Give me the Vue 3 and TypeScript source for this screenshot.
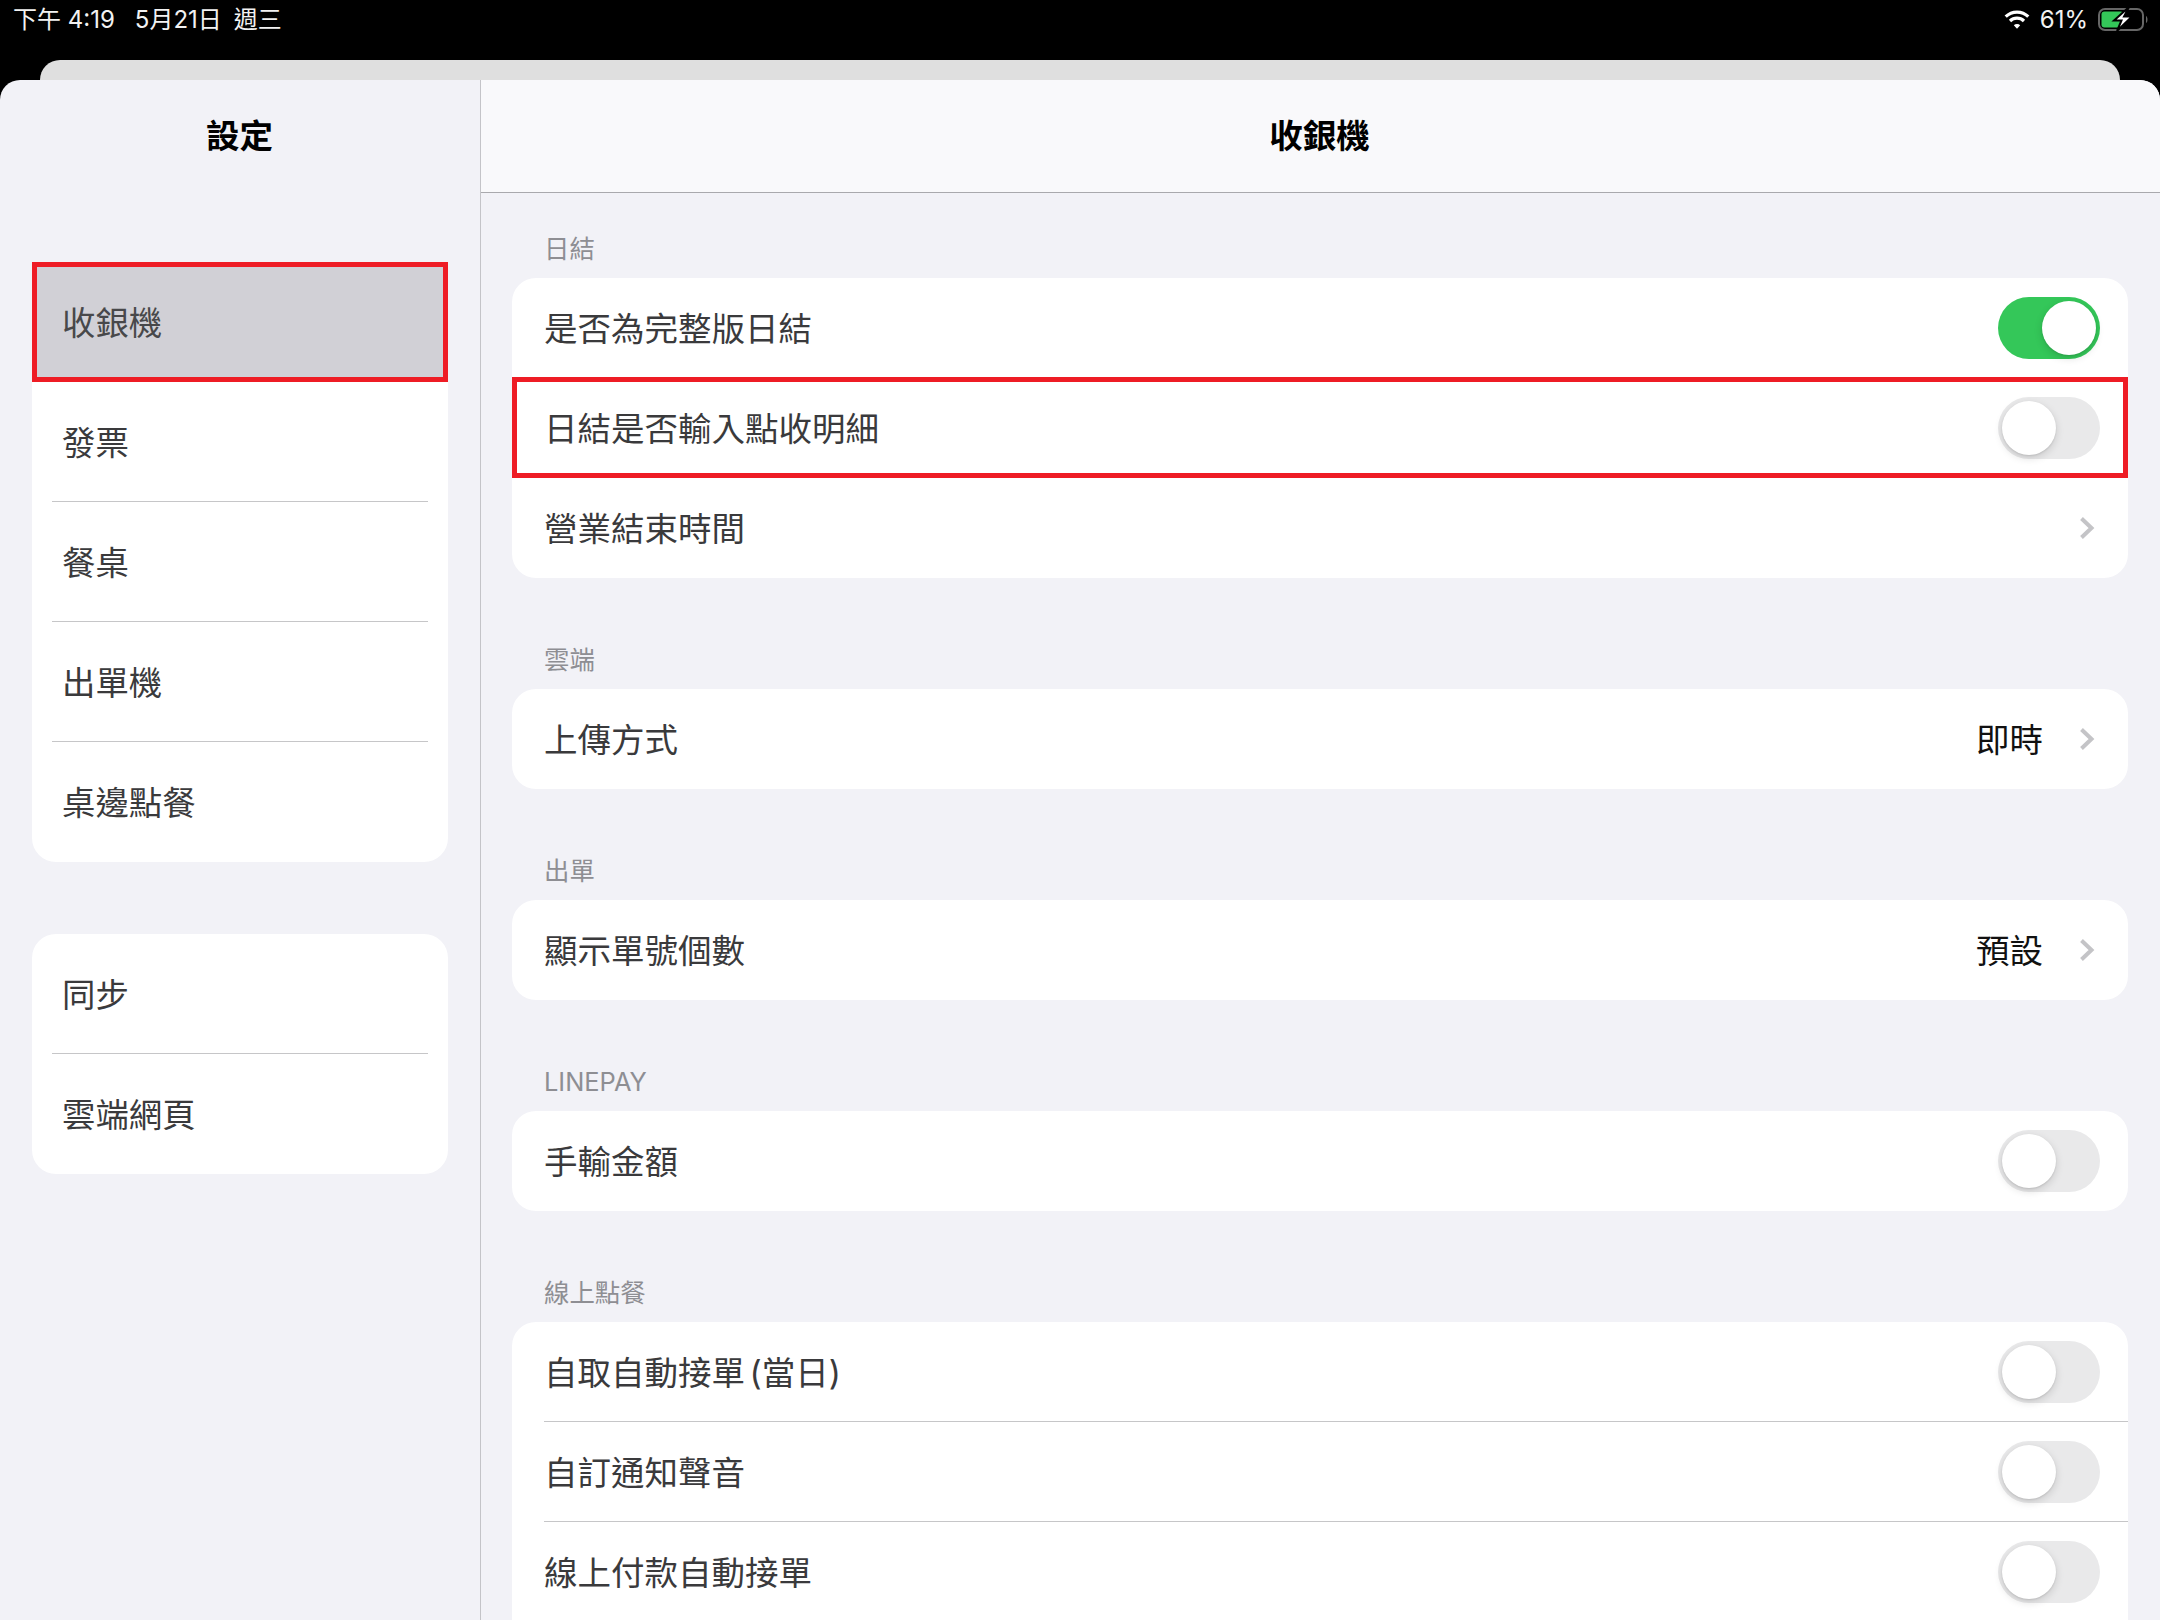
<script setup lang="ts">
interface SideRow { label: string; selected?: boolean }
interface Row { label: string; kind: 'toggle' | 'link'; on?: boolean; value?: string; marked?: boolean; rule?: boolean }
interface Section { title: string; rows: Row[]; open?: boolean }

const sideGroups: SideRow[][] = [
  [
    { label: '收銀機', selected: true },
    { label: '發票' },
    { label: '餐桌' },
    { label: '出單機' },
    { label: '桌邊點餐' },
  ],
  [{ label: '同步' }, { label: '雲端網頁' }],
]

const sections: Section[] = [
  {
    title: '日結',
    rows: [
      { label: '是否為完整版日結', kind: 'toggle', on: true },
      { label: '日結是否輸入點收明細', kind: 'toggle', marked: true },
      { label: '營業結束時間', kind: 'link' },
    ],
  },
  { title: '雲端', rows: [{ label: '上傳方式', kind: 'link', value: '即時' }] },
  { title: '出單', rows: [{ label: '顯示單號個數', kind: 'link', value: '預設' }] },
  { title: 'LINEPAY', rows: [{ label: '手輸金額', kind: 'toggle' }] },
  {
    title: '線上點餐',
    open: true,
    rows: [
      { label: '自取自動接單 (當日)', kind: 'toggle', rule: true },
      { label: '自訂通知聲音', kind: 'toggle', rule: true },
      { label: '線上付款自動接單', kind: 'toggle' },
    ],
  },
]
</script>

<template>
  <div class="page">
    <header class="status">
      <div class="status-left">
        <span>下午 4:19</span>
        <span>5月21日</span>
        <span>週三</span>
      </div>
      <div class="status-right">
        <svg class="wifi" width="26" height="20" viewBox="0 0 26 20" fill="none" stroke="#fff" stroke-width="3.2">
          <path d="M1.7 6.7A16 16 0 0 1 24.3 6.7" />
          <path d="M6 11A10 10 0 0 1 20 11" />
          <path d="M9.8 15.2 13 18.8 16.2 15.2A4.6 4.6 0 0 0 9.8 15.2Z" fill="#fff" stroke="none" />
        </svg>
        <span class="pct">61%</span>
        <svg class="battery" width="54" height="26" viewBox="0 0 54 26" fill="none">
          <rect x="2" y="3" width="44" height="21" rx="6" stroke="#666" stroke-width="2" />
          <rect x="4.5" y="5.5" width="22" height="16" rx="3" fill="#34c759" />
          <path d="M49 10C51 11 51 16 49 17Z" fill="#666" />
          <path d="M32 1 17 14.5H24.5L20 25 35 10.5H27Z" fill="#fff" stroke="#000" stroke-width="2" />
        </svg>
      </div>
    </header>
    <div class="back-sheet"></div>
    <div class="sheet">
      <aside class="sidebar">
        <h1 class="side-title">設定</h1>
        <div class="side-groups">
          <div v-for="(group, g) in sideGroups" :key="g" class="side-card">
            <div
              v-for="(item, i) in group"
              :key="item.label"
              class="side-row"
              :class="{ selected: item.selected, rule: !item.selected && i < group.length - 1 }"
            ><span class="side-label">{{ item.label }}</span></div>
          </div>
        </div>
      </aside>
      <main class="main">
        <h2 class="main-title">收銀機</h2>
        <div class="sections">
          <section v-for="section in sections" :key="section.title" class="section">
            <div class="section-title">{{ section.title }}</div>
            <div class="card" :class="{ open: section.open }">
              <div
                v-for="row in section.rows"
                :key="row.label"
                class="row"
                :class="{ marked: row.marked, rule: row.rule, link: row.kind === 'link' }"
              >
                <span class="row-label">{{ row.label }}</span>
                <div v-if="row.kind === 'toggle'" class="switch" :class="{ on: row.on }">
                  <span class="knob"></span>
                </div>
                <div v-else class="row-end">
                  <span v-if="row.value" class="row-value">{{ row.value }}</span>
                  <svg class="chevron" width="17" height="24" viewBox="0 0 17 24" fill="none">
                    <path d="M2.5 2.5 12.5 12 2.5 21.5" stroke="#c4c4c7" stroke-width="4" />
                  </svg>
                </div>
              </div>
            </div>
          </section>
        </div>
      </main>
    </div>
  </div>
</template>

<style>
html, body { margin: 0; background: #fff; }
</style>

<style scoped>
.page {
  width: 2160px;
  height: 1620px;
  overflow: hidden;
  background: #000;
  display: flex;
  flex-direction: column;
  font-family: Inter, "Noto Sans CJK TC", sans-serif;
  color: #3a3a3c;
}
.status {
  height: 60px;
  flex: none;
  display: flex;
  justify-content: space-between;
  color: #f2f2f2;
  font-size: 24px;
  line-height: 40px;
}
.status-left { display: flex; padding-left: 13px; }
.status-left span:nth-child(2) { margin-left: 20px; }
.status-left span:nth-child(3) { margin-left: 12px; }
.status-right { display: flex; align-items: flex-start; padding-right: 9px; }
.wifi { margin-top: 10px; }
.pct { margin-left: 10px; font-size: 24px; }
.battery { margin-left: 9px; margin-top: 6px; }
.back-sheet {
  flex: none;
  height: 20px;
  margin: 0 40px;
  background: #dfdfdf;
  border-radius: 20px 20px 0 0;
}
.sheet {
  flex: 1;
  min-height: 0;
  display: flex;
  overflow: hidden;
  border-radius: 20px 20px 0 0;
  background: #f2f2f7;
}
.sidebar {
  flex: none;
  width: 481px;
  box-sizing: border-box;
  border-right: 1px solid #c4c4c8;
}
.side-title {
  margin: 0;
  height: 112px;
  line-height: 112px;
  text-align: center;
  font-size: 33.5px;
  font-weight: 700;
  color: #000;
  padding-right: 1px;
}
.side-groups {
  margin: 70px 32px 0;
  display: flex;
  flex-direction: column;
  gap: 72px;
}
.side-card {
  background: #fff;
  border-radius: 24px;
}
.side-row {
  height: 120px;
  box-sizing: border-box;
  margin: 0 20px;
  padding-left: 10px;
  display: flex;
  align-items: center;
  font-size: 33.4px;
}
.side-label, .row-label { padding-bottom: 3px; }
.row-label { word-spacing: -5px; }
.side-row.rule { border-bottom: 1px solid #c6c6c8; }
.side-row.selected {
  margin: 0;
  padding-left: 25px;
  border: 5px solid #ee1c25;
  background: #d1d0d6;
  color: #48484a;
}
.main {
  flex: 1;
  min-width: 0;
}
.main-title {
  margin: 0;
  height: 113px;
  box-sizing: border-box;
  line-height: 112px;
  padding-right: 2px;
  text-align: center;
  font-size: 33.5px;
  font-weight: 700;
  color: #000;
  background: #f9f9fb;
  border-bottom: 1px solid #a9a9ad;
}
.sections {
  padding: 39px 32px 0 31px;
  display: flex;
  flex-direction: column;
  gap: 65px;
}
.section-title {
  height: 34px;
  line-height: 34px;
  margin-bottom: 12px;
  padding-left: 32px;
  font-size: 25.4px;
  color: #8e8e93;
}
.card {
  background: #fff;
  border-radius: 24px;
}
.card.open { border-radius: 24px 24px 0 0; }
.row {
  height: 100px;
  box-sizing: border-box;
  margin-left: 32px;
  padding-right: 28px;
  display: flex;
  align-items: center;
  justify-content: space-between;
  font-size: 33.5px;
}
.row.link { padding-right: 32px; }
.row.rule { border-bottom: 1px solid #c6c6c8; }
.row.marked {
  height: 101px;
  margin: -1px 0 0;
  padding: 0 23px 0 27px;
  border: 5px solid #ee1c25;
}
.row-end {
  display: flex;
  align-items: center;
  gap: 36px;
}
.row-value { color: #111; padding-bottom: 3px; }
.chevron { display: block; }
.switch {
  width: 102px;
  height: 62px;
  box-sizing: border-box;
  padding: 4px;
  border-radius: 31px;
  background: #e9e9ea;
  display: flex;
  justify-content: flex-start;
}
.switch.on {
  background: #34c759;
  justify-content: flex-end;
}
.knob {
  width: 54px;
  height: 54px;
  border-radius: 50%;
  background: #fff;
  box-shadow: 0 3px 8px rgba(0, 0, 0, 0.14), 0 1px 2px rgba(0, 0, 0, 0.1);
}
</style>
